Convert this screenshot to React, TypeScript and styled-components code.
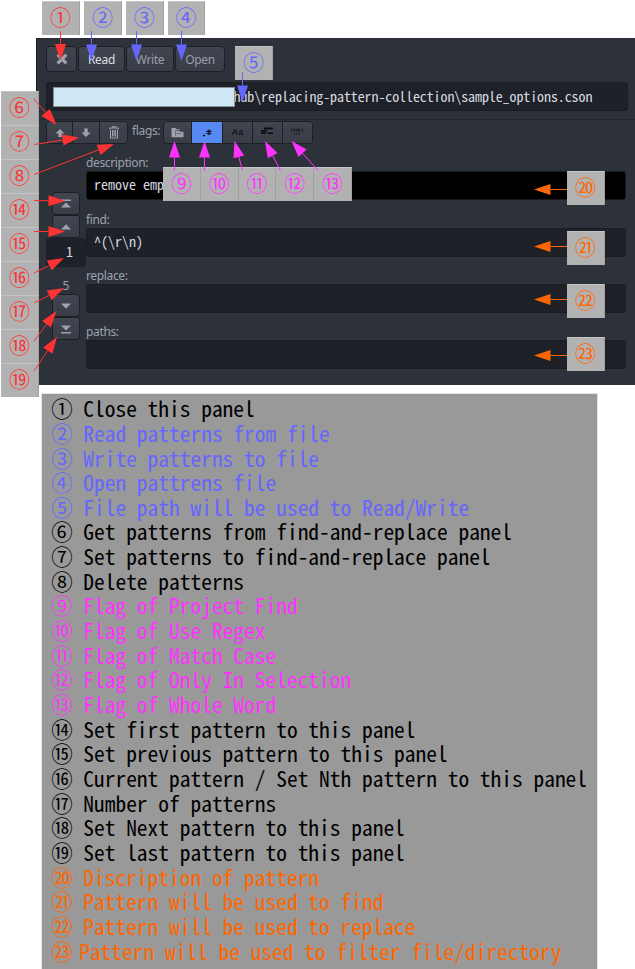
import React from 'react';
import styled, { createGlobalStyle } from 'styled-components';

const MONO = '"Noto Sans Mono CJK JP", "Noto Sans CJK JP", monospace';
const UI = '"Noto Sans", "Noto Sans CJK JP", sans-serif';

const RED = '#ff3333';
const BLUE = '#6666ff';
const PINK = '#ff33ff';
const ORANGE = '#ff6600';
const BLACK = '#000000';

const GlobalStyle = createGlobalStyle`
  * { box-sizing: border-box; }
  body { margin: 0; background: #fff; overflow: hidden; }
`;

const Page = styled.div`
  position: relative;
  width: 635px;
  height: 969px;
  padding-top: 38px;
  overflow: hidden;
  font-family: ${UI};
`;

const Panel = styled.section`
  display: flex;
  flex-direction: column;
  width: 599px;
  height: 347px;
  margin-left: 36px;
  background: #2d3139;
  border-left: 1px solid #1b1d23;
  border-top: 1px solid #292c33;
`;

const FileSection = styled.div`
  display: flex;
  flex-direction: column;
  gap: 10px;
  height: 81px;
  padding: 7px 7px 0 9px;
  border-bottom: 1px solid #24272e;
`;

const ButtonRow = styled.div`
  display: flex;
  gap: 1px;
  height: 26px;
`;

const Button = styled.button<{ $w: number; $bright?: boolean }>`
  display: flex;
  align-items: center;
  justify-content: center;
  width: ${(p) => p.$w}px;
  height: 26px;
  padding: 0;
  border: 1px solid #1d1f25;
  border-radius: 4px;
  background: linear-gradient(#41454f, #3a3d47);
  color: ${(p) => (p.$bright ? '#dcdfe6' : '#9a9fab')};
  font: 12px ${UI};
  letter-spacing: -0.3px;
`;

const Field = styled.div<{ $dark?: boolean }>`
  position: relative;
  display: flex;
  align-items: center;
  height: 29px;
  flex: none;
  padding: 0 7px 3px;
  border: 1px solid ${(p) => (p.$dark ? '#17191d' : '#1a1c21')};
  border-radius: 3px;
  background: ${(p) => (p.$dark ? '#000' : '#1e2127')};
  color: #d7dae0;
  font: 14px/20px ${MONO};
  white-space: pre;
`;

const PathField = styled(Field)`
  padding: 0 0 2px 186.5px;
  letter-spacing: -0.1px;
`;

const PathMask = styled.span`
  position: absolute;
  left: 6px;
  top: 4px;
  width: 182px;
  height: 20px;
  border: 1px solid #8a8f94;
  background: #cfe7f5;
`;

const ToolRow = styled.div`
  display: flex;
  height: 23px;
  margin: 1px 0 0 9px;
`;

const ButtonGroup = styled.div`
  display: flex;
  border: 1px solid #1d1f25;
  border-radius: 4px;
  overflow: hidden;
`;

const GroupButton = styled.button<{ $w: number; $on?: boolean }>`
  display: flex;
  align-items: center;
  justify-content: center;
  width: ${(p) => p.$w}px;
  padding: 0;
  border: 0;
  background: ${(p) => (p.$on ? '#568af2' : 'linear-gradient(#41454f, #3a3d47)')};
  & + & { border-left: 1px solid #1d1f25; }
`;

const FlagsLabel = styled.span`
  width: 35px;
  padding-left: 4px;
  color: #9da2ae;
  font: 12px/20px ${UI};
  letter-spacing: -0.35px;
`;

const Editor = styled.div`
  display: flex;
  padding: 9px 9px 0 9px;
`;

const Navigator = styled.div`
  display: flex;
  flex-direction: column;
  align-items: center;
  width: 40px;
  padding-top: 39px;
`;

const NavButton = styled.button`
  display: flex;
  align-items: center;
  justify-content: center;
  width: 28px;
  height: 23px;
  flex: none;
  padding: 0;
  border: 1px solid #1d1f25;
  border-radius: 3px;
  background: linear-gradient(#41454f, #3a3d47);
`;

const Current = styled.div`
  width: 40px;
  height: 29px;
  padding-left: 20px;
  border-radius: 3px;
  background: #1e2127;
  color: #d7dae0;
  font: 14px/26px ${MONO};
`;

const Total = styled.div`
  height: 27px;
  color: #9da2ae;
  font: 12px/38px ${UI};
`;

const Fields = styled.div`
  flex: 1;
`;

const Row = styled.div<{ $h: number }>`
  height: ${(p) => p.$h}px;
`;

const Label = styled.div`
  height: 18px;
  color: #9da2ae;
  font: 12px/20px ${UI};
  letter-spacing: -0.35px;
`;

const Legend = styled.ol`
  width: 555px;
  height: 575px;
  margin: 9px 0 0 42px;
  padding: 2.2px 0 0 9.2px;
  list-style: none;
  background: #999;
  box-shadow: 0 0 0 1px #e4e4e4;
`;

const LegendItem = styled.li<{ $color: string }>`
  height: 24.67px;
  color: ${(p) => p.$color};
  font: 21.44px/24.67px ${MONO};
  white-space: pre;
`;

const ItemMark = styled.span<{ $tight?: boolean }>`
  display: inline-block;
  width: ${(p) => (p.$tight ? 28 : 32.1)}px;
`;

const BadgeStrip = styled.div<{ $x: number; $y: number; $column?: boolean; $gap?: number }>`
  position: absolute;
  left: ${(p) => p.$x}px;
  top: ${(p) => p.$y}px;
  display: flex;
  flex-direction: ${(p) => (p.$column ? 'column' : 'row')};
  gap: ${(p) => p.$gap || 0}px;
`;

const Badge = styled.span<{ $color: string }>`
  display: flex;
  justify-content: center;
  width: 37.8px;
  height: 34px;
  border-top: 1px solid #c4c4c4;
  border-right: 1px solid #a0a0a0;
  background: #b2b2b2;
  color: ${(p) => p.$color};
  font: 21px/28px ${MONO};
`;

const ArrowLayer = styled.svg`
  position: absolute;
  left: 0;
  top: 0;
  pointer-events: none;
`;

type ArrowSpec = [number, number, number, number, string];

const arrows: ArrowSpec[] = [
  [60.5, 31, 60.5, 60.5, RED],
  [91.5, 31, 91.5, 61, BLUE],
  [136.5, 31, 136.5, 61, BLUE],
  [181.5, 31, 181.5, 61, BLUE],
  [242.5, 72, 242.5, 102, BLUE],
  [34, 99, 56.5, 125, RED],
  [34, 144.5, 79, 137.5, RED],
  [34, 174.5, 114, 144, RED],
  [34, 200.5, 65, 201, RED],
  [34, 231.5, 65, 231.5, RED],
  [34, 273, 64, 258, RED],
  [34, 303, 64, 288, RED],
  [34, 341, 56.5, 311, RED],
  [34, 371, 57, 337, RED],
  [174.5, 171, 174.5, 141, PINK],
  [204.5, 171, 204.5, 141, PINK],
  [242.5, 170.5, 234.5, 141, PINK],
  [280.5, 170.5, 265, 141, PINK],
  [318, 170.5, 291.5, 141, PINK],
  [567, 189.5, 534, 189.5, ORANGE],
  [567, 246.5, 534, 246.5, ORANGE],
  [567, 299.5, 534, 299.5, ORANGE],
  [567, 355.5, 534, 355.5, ORANGE],
];

function Arrow({ spec }: { spec: ArrowSpec }) {
  const [x1, y1, x2, y2, color] = spec;
  const length = Math.hypot(x2 - x1, y2 - y1);
  const ux = (x2 - x1) / length;
  const uy = (y2 - y1) / length;
  const bx = x2 - ux * 16.5;
  const by = y2 - uy * 16.5;
  const points = `${x2},${y2} ${bx - uy * 5.5},${by + ux * 5.5} ${bx + uy * 5.5},${by - ux * 5.5}`;
  return (
    <g fill={color} stroke={color}>
      <line x1={x1} y1={y1} x2={bx} y2={by} strokeWidth="1" />
      <polygon points={points} stroke="none" />
    </g>
  );
}

const legend: [string, string, string][] = [
  ['①', 'Close this panel', BLACK],
  ['②', 'Read patterns from file', BLUE],
  ['③', 'Write patterns to file', BLUE],
  ['④', 'Open pattrens file', BLUE],
  ['⑤', 'File path will be used to Read/Write', BLUE],
  ['⑥', 'Get patterns from find-and-replace panel', BLACK],
  ['⑦', 'Set patterns to find-and-replace panel', BLACK],
  ['⑧', 'Delete patterns', BLACK],
  ['⑨', 'Flag of Project Find', PINK],
  ['⑩', 'Flag of Use Regex', PINK],
  ['⑪', 'Flag of Match Case', PINK],
  ['⑫', 'Flag of Only In Selection', PINK],
  ['⑬', 'Flag of Whole Word', PINK],
  ['⑭', 'Set first pattern to this panel', BLACK],
  ['⑮', 'Set previous pattern to this panel', BLACK],
  ['⑯', 'Current pattern / Set Nth pattern to this panel', BLACK],
  ['⑰', 'Number of patterns', BLACK],
  ['⑱', 'Set Next pattern to this panel', BLACK],
  ['⑲', 'Set last pattern to this panel', BLACK],
  ['⑳', 'Discription of pattern', ORANGE],
  ['㉑', 'Pattern will be used to find', ORANGE],
  ['㉒', 'Pattern will be used to replace', ORANGE],
  ['㉓', 'Pattern will be used to filter file/directory', ORANGE],
];

const ICON = '#9da2ae';

const CloseIcon = () => (
  <svg width="12" height="12" viewBox="0 0 11 11">
    <path d="M1.5 1.5 9.5 9.5M9.5 1.5 1.5 9.5" stroke={ICON} strokeWidth="3" />
  </svg>
);
const UpArrowIcon = () => (
  <svg width="10" height="10" viewBox="0 0 10 10">
    <path d="M5 1 9.5 5.5H6.7V9H3.3V5.5H.5Z" fill={ICON} />
  </svg>
);
const DownArrowIcon = () => (
  <svg width="10" height="10" viewBox="0 0 10 10">
    <path d="M5 9 .5 4.5H3.3V.5H6.7V4.5H9.5Z" fill={ICON} />
  </svg>
);
const TrashIcon = () => (
  <svg width="10" height="13" viewBox="0 0 10 13" fill="none" stroke={ICON}>
    <path d="M.5 3V2H9.5V3M3.5 2V.6H6.5V2M1.5 3.5V12H8.5V3.5M3.5 4V10.5M5 4V10.5M6.5 4V10.5" />
  </svg>
);
const FolderIcon = () => (
  <svg width="13" height="11" viewBox="0 0 13 11">
    <path d="M.5 1H4.5L5.5 2.2H8.5V3.2H4.5V10H.5Z" fill={ICON} />
    <path d="M5 3.7H8.2L9 4.7H12.5V10.3H2V9.3H5Z" fill={ICON} />
    <path d="M5.5 6.6H9.5" fill="none" stroke="#5b606b" />
  </svg>
);
const RegexIcon = () => (
  <svg width="12" height="12" viewBox="0 0 12 12">
    <path d="M2 8.5h2M8 2.5v5.6M5.6 3.9l4.8 2.8M10.4 3.9 5.6 6.7" fill="none" stroke="#0b1120" strokeWidth="1.4" />
  </svg>
);
const CaseGlyph = styled.span`
  color: #111318;
  font: bold 9px/12px "Liberation Sans", sans-serif;
  letter-spacing: 0.2px;
  padding-bottom: 2px;
`;
const FlagGlyph = styled.svg`
  margin: 0 2px 3px 0;
`;
const SelectionIcon = () => (
  <FlagGlyph width="12" height="8" viewBox="0 0 12 8">
    <path d="M3 1.5H12M0 3.8H6M0 6.2H5M6.5 6.2H12" fill="none" stroke="#0d0f13" strokeWidth="1.8" />
    <path d="M7 4H12" stroke="#4e535f" />
  </FlagGlyph>
);
const WordIcon = () => (
  <FlagGlyph width="12" height="8" viewBox="0 0 12 8">
    <path d="M.5 .5V5M11.5 .5V5M2.5 6.7H9.5" fill="none" stroke="#1d2027" />
    <path d="M3.2 1.5V4.5M5.2 2V4.5M7.2 1V4.5M9 2V4.5" stroke="#15181e" strokeWidth="1.2" />
  </FlagGlyph>
);

function NavIcon({ down, bar }: { down?: boolean; bar?: boolean }) {
  return (
    <svg width="12" height="12" viewBox="0 0 12 12">
      <g fill={ICON} transform={down ? 'rotate(180 6 6)' : undefined}>
        {bar ? <path d="M1 1.5H11V3H1ZM6 4.5 11 9.5H1Z" /> : <path d="M6 3.2 11 8.5H1Z" />}
      </g>
    </svg>
  );
}

export default function App() {
  return (
    <>
      <GlobalStyle />
      <Page>
        <Panel>
          <FileSection>
            <ButtonRow>
              <Button $w={31}><CloseIcon /></Button>
              <Button $w={47} $bright>Read</Button>
              <Button $w={48}>Write</Button>
              <Button $w={50}>Open</Button>
            </ButtonRow>
            <PathField>
              hub\replacing-pattern-collection\sample_options.cson
              <PathMask />
            </PathField>
          </FileSection>
          <ToolRow>
            <ButtonGroup>
              <GroupButton $w={25}><UpArrowIcon /></GroupButton>
              <GroupButton $w={27}><DownArrowIcon /></GroupButton>
              <GroupButton $w={28}><TrashIcon /></GroupButton>
            </ButtonGroup>
            <FlagsLabel>flags:</FlagsLabel>
            <ButtonGroup>
              <GroupButton $w={27}><FolderIcon /></GroupButton>
              <GroupButton $w={31} $on><RegexIcon /></GroupButton>
              <GroupButton $w={30}><CaseGlyph>Aa</CaseGlyph></GroupButton>
              <GroupButton $w={30}><SelectionIcon /></GroupButton>
              <GroupButton $w={30}><WordIcon /></GroupButton>
            </ButtonGroup>
          </ToolRow>
          <Editor>
            <Navigator>
              <NavButton><NavIcon bar /></NavButton>
              <NavButton><NavIcon /></NavButton>
              <Current>1</Current>
              <Total>5</Total>
              <NavButton><NavIcon down /></NavButton>
              <NavButton><NavIcon down bar /></NavButton>
            </Navigator>
            <Fields>
              <Row $h={57}><Label>description:</Label><Field $dark>remove emp</Field></Row>
              <Row $h={56}><Label>find:</Label><Field>{'^(\\r\\n)'}</Field></Row>
              <Row $h={56}><Label>replace:</Label><Field /></Row>
              <Row $h={47}><Label>paths:</Label><Field /></Row>
            </Fields>
          </Editor>
        </Panel>
        <Legend>
          {legend.map(([mark, text, color]) => (
            <LegendItem key={mark} $color={color}>
              <ItemMark $tight={mark === '㉓'}>{mark}</ItemMark>{text}
            </LegendItem>
          ))}
        </Legend>

        <BadgeStrip $x={42} $y={1}><Badge $color={RED}>①</Badge></BadgeStrip>
        <BadgeStrip $x={84} $y={1} $gap={4}>
          <Badge $color={BLUE}>②</Badge>
          <Badge $color={BLUE}>③</Badge>
          <Badge $color={BLUE}>④</Badge>
        </BadgeStrip>
        <BadgeStrip $x={235} $y={46}><Badge $color={BLUE}>⑤</Badge></BadgeStrip>
        <BadgeStrip $x={1} $y={91} $column>
          {['⑥', '⑦', '⑧', '⑭', '⑮', '⑯', '⑰', '⑱', '⑲'].map((n) => (
            <Badge key={n} $color={RED}>{n}</Badge>
          ))}
        </BadgeStrip>
        <BadgeStrip $x={163} $y={167}>
          {['⑨', '⑩', '⑪', '⑫', '⑬'].map((n) => (
            <Badge key={n} $color={PINK}>{n}</Badge>
          ))}
        </BadgeStrip>
        <BadgeStrip $x={567} $y={171}><Badge $color={ORANGE}>⑳</Badge></BadgeStrip>
        <BadgeStrip $x={567} $y={231}><Badge $color={ORANGE}>㉑</Badge></BadgeStrip>
        <BadgeStrip $x={567} $y={284}><Badge $color={ORANGE}>㉒</Badge></BadgeStrip>
        <BadgeStrip $x={567} $y={337}><Badge $color={ORANGE}>㉓</Badge></BadgeStrip>
        <ArrowLayer width="635" height="390" viewBox="0 0 635 390">
          {arrows.map((spec, i) => <Arrow key={i} spec={spec} />)}
        </ArrowLayer>
      </Page>
    </>
  );
}
